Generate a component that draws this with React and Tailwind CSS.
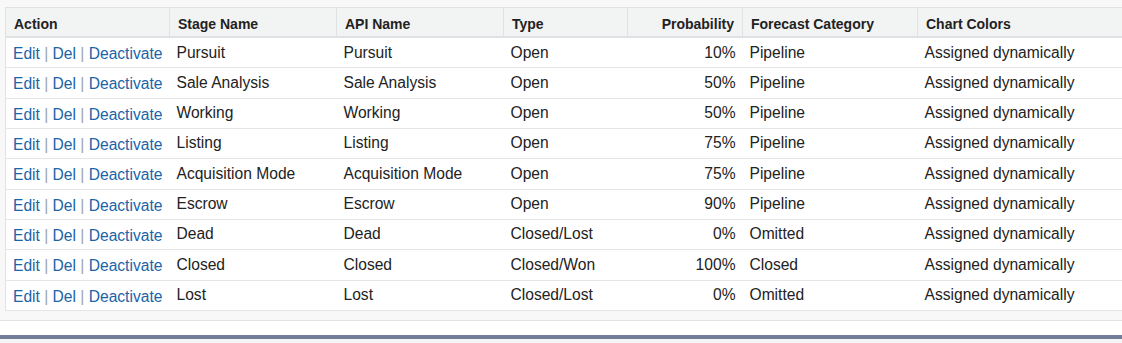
const COLS = [
  { key: 'action', label: 'Action', w: 'w-[164px]' },
  { key: 'stage', label: 'Stage Name', w: 'w-[167px]' },
  { key: 'api', label: 'API Name', w: 'w-[167px]' },
  { key: 'type', label: 'Type', w: 'w-[124px]' },
  { key: 'prob', label: 'Probability', w: 'w-[115px]', right: true },
  { key: 'forecast', label: 'Forecast Category', w: 'w-[175px]' },
  { key: 'colors', label: 'Chart Colors', w: 'w-[220px]' },
];

const STAGES = [
  ['Pursuit', 'Open', '10%', 'Pipeline'],
  ['Sale Analysis', 'Open', '50%', 'Pipeline'],
  ['Working', 'Open', '50%', 'Pipeline'],
  ['Listing', 'Open', '75%', 'Pipeline'],
  ['Acquisition Mode', 'Open', '75%', 'Pipeline'],
  ['Escrow', 'Open', '90%', 'Pipeline'],
  ['Dead', 'Closed/Lost', '0%', 'Omitted'],
  ['Closed', 'Closed/Won', '100%', 'Closed'],
  ['Lost', 'Closed/Lost', '0%', 'Omitted'],
];

function ActionLinks() {
  return (
    <>
      <a href="#" className="text-[#1a64a8]">Edit</a>
      <span className="text-[#9aa3ab]"> | </span>
      <a href="#" className="text-[#1a64a8]">Del</a>
      <span className="text-[#9aa3ab]"> | </span>
      <a href="#" className="text-[#1a64a8]">Deactivate</a>
    </>
  );
}

export default function App() {
  const cell = 'align-top pl-[7px] pr-[7px] pt-[5.5px] pb-[5.83px] leading-[18px] whitespace-nowrap';

  return (
    <div className="w-[1122px] h-[343px] overflow-hidden bg-[#f4f5f7] font-['Liberation_Sans',Arial,sans-serif]">
      <div className="bg-[#f8f8f8] pt-[7px] pl-[5px] pb-[9px] border-b border-[#e2e2e2]">
        <table className="table-fixed border-collapse w-[1132px] bg-white border-l border-t border-[#e0e3e5]">
          <thead>
            <tr className="bg-[#f2f3f3] border-b-2 border-[#dfe2e5]">
              {COLS.map((c, i) => (
                <th
                  key={c.key}
                  className={`${c.w} ${i > 0 ? 'border-l border-[#e0e3e5]' : ''} ${c.right ? 'text-right pr-[8px]' : 'text-left'} pl-[8px] pt-[8px] pb-[4px] leading-4 text-[14px] font-bold text-[#222]`}
                >
                  {c.label}
                </th>
              ))}
            </tr>
          </thead>
          <tbody>
            {STAGES.map(([name, type, prob, forecast]) => (
              <tr key={name} className="border-b border-[#e5e5e5] text-[15.6px] text-[#222]">
                <td className="align-top pl-[7px] pr-[1px] pt-[7px] pb-[4.33px] leading-[18px] whitespace-nowrap">
                  <ActionLinks />
                </td>
                <td className={cell}>{name}</td>
                <td className={cell}>{name}</td>
                <td className={cell}>{type}</td>
                <td className={`${cell} text-right`}>{prob}</td>
                <td className={cell}>{forecast}</td>
                <td className={cell}>Assigned dynamically</td>
              </tr>
            ))}
          </tbody>
        </table>
      </div>
      <div className="h-[14px] bg-white" />
      <div className="h-[4px] bg-[#737d98]" />
    </div>
  );
}
